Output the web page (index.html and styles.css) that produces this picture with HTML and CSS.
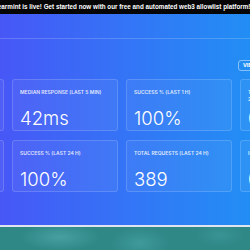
FILE: index.html
```html
<!DOCTYPE html>
<html lang="en">
<head>
    <meta charset="UTF-8">
    <meta name="viewport" content="width=device-width, initial-scale=1.0">
    <title>Spearmint Status</title>
    <link rel="stylesheet" href="styles.css">
</head>
<body>
    <div class="announce">
        <span class="announce-text">Spearmint is live! Get started now with our free and automated web3 allowlist platform! 🎉</span>
    </div>

    <div class="page">
        <nav class="nav"></nav>

        <div class="main">
            <div class="toolbar">
                <span class="toolbar-title">Registration</span>
                <a class="btn-outline" href="#">View details</a>
            </div>

            <div class="stats">
                <div class="card">
                    <div class="card-label">Uptime (last 5 min)</div>
                    <div class="card-value">100%</div>
                </div>
                <div class="card">
                    <div class="card-label">Median response (last 5 min)</div>
                    <div class="card-value">42ms</div>
                </div>
                <div class="card">
                    <div class="card-label">Success % (last 1 h)</div>
                    <div class="card-value">100%</div>
                </div>
                <div class="card">
                    <div class="card-label">Transactions processed (last 24 h)</div>
                    <div class="card-value">0</div>
                </div>

                <div class="card">
                    <div class="card-label">Uptime (last 24 h)</div>
                    <div class="card-value">100%</div>
                </div>
                <div class="card">
                    <div class="card-label">Success % (last 24 h)</div>
                    <div class="card-value">100%</div>
                </div>
                <div class="card">
                    <div class="card-label">Total requests (last 24 h)</div>
                    <div class="card-value">389</div>
                </div>
                <div class="card">
                    <div class="card-label">Incidents (last 24 h)</div>
                    <div class="card-value">0</div>
                </div>
            </div>
        </div>
    </div>

    <div class="footer-band"></div>
</body>
</html>
```

FILE: styles.css
```css
* {
    margin: 0;
    padding: 0;
    box-sizing: border-box;
}

body {
    font-family: Inter, 'Noto Sans', sans-serif;
    color: white;
    width: 250px;
    height: 250px;
    overflow: hidden;
    background: #2f8a88;
}

.announce {
    height: 14px;
    background: #050505;
    display: flex;
    justify-content: center;
    align-items: center;
    white-space: nowrap;
}

.announce-text {
    font-family: 'Liberation Sans', Arial, sans-serif;
    font-size: 6.3px;
    font-weight: 700;
}

.page {
    background: linear-gradient(90deg, #4757f6 0%, #3474f6 50%, #228ef4 100%);
    height: 211px;
}

.nav {
    height: 25px;
    border-bottom: 1px solid rgba(255, 255, 255, 0.18);
}

.main {
    padding-top: 21px;
}

.toolbar {
    display: flex;
    justify-content: space-between;
    align-items: center;
    margin: 0 -40px 0 -50px;
    height: 11px;
}

.toolbar-title {
    font-size: 6px;
    font-weight: 600;
    text-transform: uppercase;
    color: rgba(255, 255, 255, 0.85);
}

.btn-outline {
    display: block;
    height: 11px;
    width: 52px;
    line-height: 9px;
    font-size: 5.2px;
    font-weight: 700;
    text-transform: uppercase;
    color: white;
    text-decoration: none;
    border: 1px solid rgba(255, 255, 255, 0.45);
    border-radius: 3px;
    padding: 0 4px;
}

.stats {
    display: grid;
    grid-template-columns: repeat(4, 106px);
    grid-auto-rows: 52px;
    gap: 9px 8px;
    margin-left: -102px;
    margin-top: 8px;
}

.card {
    background: rgba(255, 255, 255, 0.05);
    border: 1px solid rgba(255, 255, 255, 0.16);
    border-radius: 3px;
    padding: 9px 7px 3px;
    display: flex;
    flex-direction: column;
    justify-content: space-between;
}

.card-label {
    font-size: 5px;
    font-weight: 600;
    line-height: 7px;
    text-transform: uppercase;
    color: rgba(255, 255, 255, 0.85);
}

.card-value {
    font-size: 18.5px;
    font-weight: 300;
    line-height: 1;
}

.footer-band {
    height: 25px;
    border-top: 2px solid #dfe4ee;
    background:
        radial-gradient(ellipse 40px 14px at 60px 10px, rgba(90, 180, 180, 0.55), transparent),
        radial-gradient(ellipse 30px 16px at 140px 16px, rgba(80, 170, 175, 0.5), transparent),
        radial-gradient(ellipse 25px 12px at 220px 8px, rgba(70, 160, 165, 0.45), transparent),
        #2f8886;
}
```
